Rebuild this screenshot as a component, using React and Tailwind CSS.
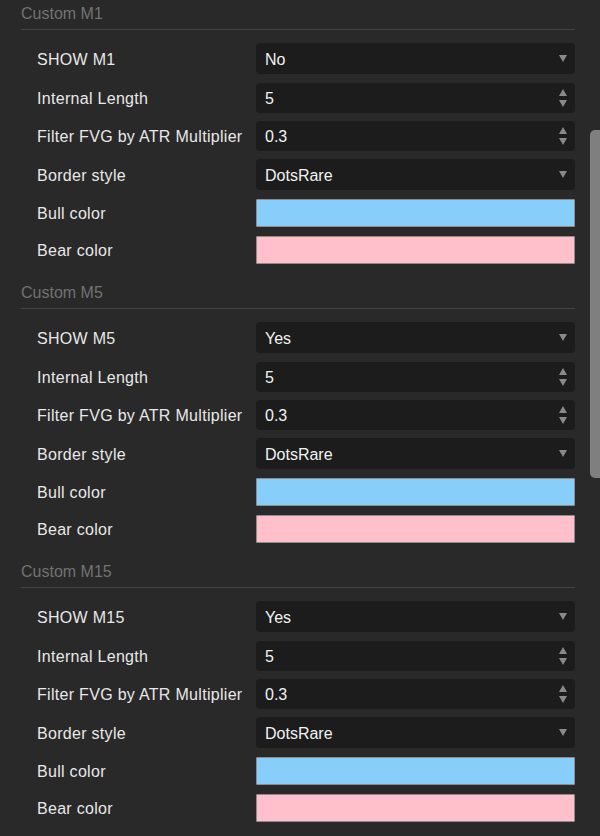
const sections = [
  { title: "Custom M1", show: "SHOW M1", value: "No" },
  { title: "Custom M5", show: "SHOW M5", value: "Yes" },
  { title: "Custom M15", show: "SHOW M15", value: "Yes" },
];

function Arrow() {
  return (
    <svg width="8" height="7" viewBox="0 0 8 7">
      <path d="M0 0 H8 L4 7 Z" fill="#8a8a8a" />
    </svg>
  );
}

function Spinner() {
  return (
    <div className="flex flex-col gap-[4px]">
      <svg width="8" height="7" viewBox="0 0 8 7">
        <path d="M0 7 H8 L4 0 Z" fill="#8a8a8a" />
      </svg>
      <svg width="8" height="7" viewBox="0 0 8 7">
        <path d="M0 0 H8 L4 7 Z" fill="#8a8a8a" />
      </svg>
    </div>
  );
}

function Row({ label, h, mt, children }) {
  return (
    <div className={`flex items-center ${h} ${mt}`}>
      <div className="w-[235px] pl-[16px] pt-[2px] text-[16px] tracking-[0.3px] text-[#e8e8e8] whitespace-nowrap">
        {label}
      </div>
      <div className="flex-1 h-full">{children}</div>
    </div>
  );
}

function Field({ value, kind }) {
  return (
    <div className="h-full flex items-center justify-between bg-[#1c1c1c] rounded-[4px] pl-[9px] pr-[8px] text-[16px] text-[#f2f2f2]">
      <span className="pt-[2px]">{value}</span>
      {kind === "select" ? <Arrow /> : <Spinner />}
    </div>
  );
}

function Swatch({ color }) {
  return <div className={`h-full border border-[#8c8c8c] rounded-[1px] ${color}`}></div>;
}

function Section({ s }) {
  return (
    <div className="h-[279px]">
      <div className="h-[30px] border-b border-[#434343] flex items-center pb-[1px] text-[16px] text-[#727272]">
        {s.title}
      </div>
      <Row label={s.show} h="h-[31px]" mt="mt-[13px]">
        <Field value={s.value} kind="select" />
      </Row>
      <Row label="Internal Length" h="h-[30px]" mt="mt-[9px]">
        <Field value="5" kind="spin" />
      </Row>
      <Row label="Filter FVG by ATR Multiplier" h="h-[30px]" mt="mt-[8px]">
        <Field value="0.3" kind="spin" />
      </Row>
      <Row label="Border style" h="h-[31px]" mt="mt-[8px]">
        <Field value="DotsRare" kind="select" />
      </Row>
      <Row label="Bull color" h="h-[28px]" mt="mt-[9px]">
        <Swatch color="bg-[#87cefa]" />
      </Row>
      <Row label="Bear color" h="h-[28px]" mt="mt-[9px]">
        <Swatch color="bg-[#ffc0cb]" />
      </Row>
    </div>
  );
}

export default function App() {
  return (
    <div
      className="relative w-[600px] h-[836px] overflow-hidden bg-[#292929]"
      style={{ fontFamily: '"Liberation Sans", Arial, sans-serif' }}
    >
      <div className="ml-[21px] w-[554px]">
        {sections.map((s) => (
          <Section key={s.title} s={s} />
        ))}
      </div>
      {/* scrollbar thumb */}
      <div className="absolute left-[590px] top-[130px] w-[14px] h-[348px] rounded-[5px] bg-[#7f7f7f]"></div>
    </div>
  );
}
